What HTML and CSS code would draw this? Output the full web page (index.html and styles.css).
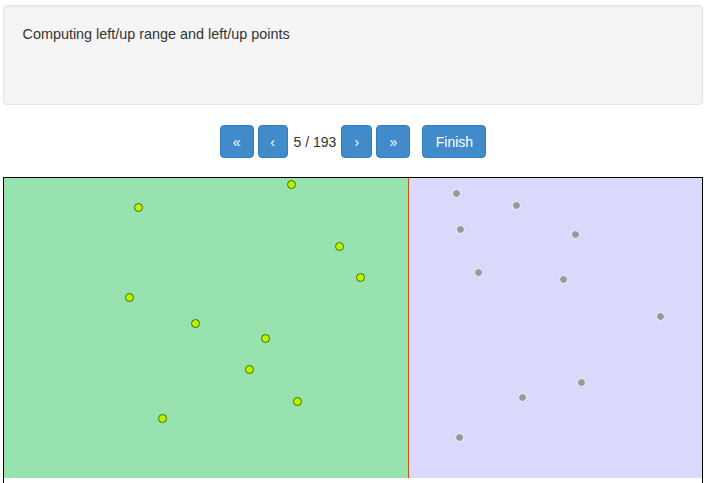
FILE: index.html
```html
<!DOCTYPE html>
<html>
<head>
<meta charset="utf-8">
<link rel="stylesheet" href="styles.css">
</head>
<body>
<div class="container">
  <div class="well">Computing left/up range and left/up points</div>
  <div class="controls">
    <button class="btn">«</button>
    <button class="btn prev">‹</button>
    <span class="counter">5 / 193</span>
    <button class="btn next">›</button>
    <button class="btn">»</button>
    <button class="btn finish">Finish</button>
  </div>
  <div class="canvas">
    <svg class="plot" width="698" height="300" viewBox="0 0 698 300">
      <rect x="0" y="0" width="404" height="300" fill="#98e2b0"/>
      <rect x="405" y="0" width="293" height="300" fill="#d9d9fc"/>
      <line x1="404.5" y1="0" x2="404.5" y2="300" stroke="#cc5500" stroke-width="1"/>
      <g class="gray">
        <circle cx="452.5" cy="15.5" r="4"/>
        <circle cx="512.5" cy="27.5" r="4"/>
        <circle cx="456.5" cy="51.5" r="4"/>
        <circle cx="571.5" cy="56.5" r="4"/>
        <circle cx="474.5" cy="94.5" r="4"/>
        <circle cx="559.5" cy="101.5" r="4"/>
        <circle cx="656.5" cy="138.5" r="4"/>
        <circle cx="577.5" cy="204.5" r="4"/>
        <circle cx="518.5" cy="219.5" r="4"/>
        <circle cx="455.5" cy="259.5" r="4"/>
      </g>
      <g class="green">
        <circle cx="287.5" cy="6.5" r="4"/>
        <circle cx="134.5" cy="29.5" r="4"/>
        <circle cx="335.5" cy="68.5" r="4"/>
        <circle cx="356.5" cy="99.5" r="4"/>
        <circle cx="125.5" cy="119.5" r="4"/>
        <circle cx="191.5" cy="145.5" r="4"/>
        <circle cx="261.5" cy="160.5" r="4"/>
        <circle cx="245.5" cy="191.5" r="4"/>
        <circle cx="293.5" cy="223.5" r="4"/>
        <circle cx="158.5" cy="240.5" r="4"/>
      </g>
    </svg>
  </div>
</div>
</body>
</html>
```
FILE: styles.css
```css
html, body {
  margin: 0;
  padding: 0;
  background: #fff;
  font-family: "Liberation Sans", Arial, sans-serif;
  font-size: 14px;
  line-height: 20px;
  color: #333;
}
.container {
  width: 700px;
  margin: 0 auto;
  padding-top: 5px;
}
.well {
  box-sizing: border-box;
  height: 100px;
  padding: 18px 19px 19px;
  font-size: 14.4px;
  background: #f5f5f5;
  border: 1px solid #e3e3e3;
  border-radius: 4px;
  box-shadow: inset 0 1px 1px rgba(0,0,0,0.05);
}
.controls {
  margin-top: 20px;
  padding-left: 1px;
  display: flex;
  justify-content: center;
  align-items: center;
  gap: 4px;
  height: 33px;
}
.btn {
  box-sizing: border-box;
  height: 33px;
  width: 34px;
  padding: 0;
  font-family: "Liberation Sans", Arial, sans-serif;
  font-size: 14px;
  line-height: 20px;
  color: #fff;
  background: #428bca;
  border: 1px solid #357ebd;
  border-radius: 4px;
}
.btn.prev {
  width: 30px;
}
.btn.next {
  width: 31px;
}
.btn.finish {
  width: 64px;
  margin-left: 8px;
}
.counter {
  padding: 0 1px 0 2px;
  color: #333;
}
.canvas {
  margin-top: 19px;
  border: 1px solid #000;
  border-bottom: none;
  height: 320px;
}
.plot {
  display: block;
}
.gray circle {
  fill: #999;
  stroke: #f4f4ff;
  stroke-width: 1;
}
.green circle {
  fill: #bff000;
  stroke: #2f7a00;
  stroke-width: 1;
}
```
